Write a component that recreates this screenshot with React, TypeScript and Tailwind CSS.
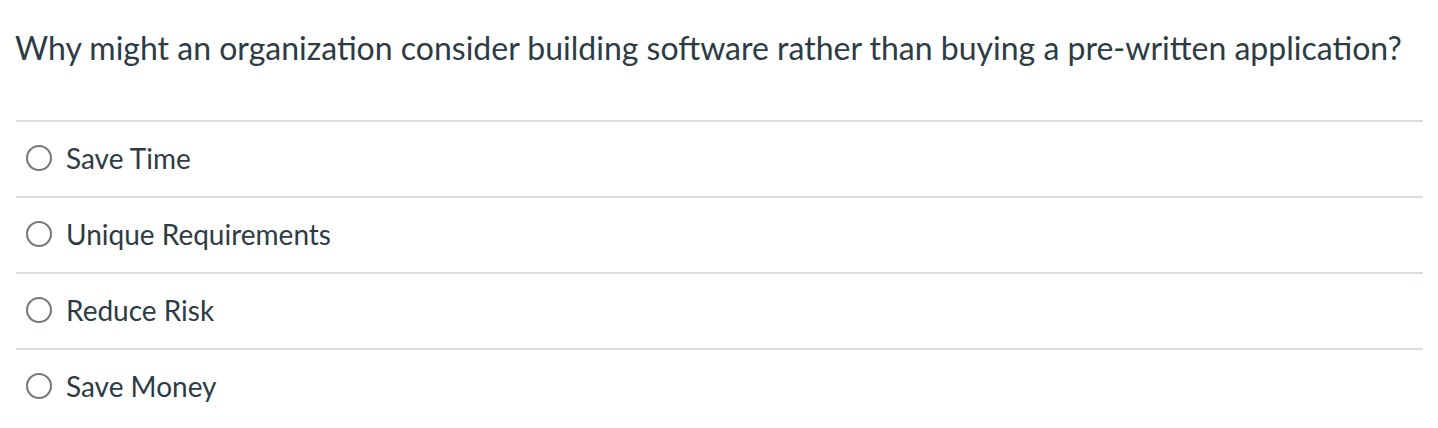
import React from "react";

const answers = ["Save Time", "Unique Requirements", "Reduce Risk", "Save Money"];

export default function App() {
  return (
    <div className="w-[1438px] h-[428px] bg-white overflow-hidden text-[#2d3b45]" style={{ fontFamily: "Lato, 'Liberation Sans', sans-serif" }}>
      <div className="pl-4 pr-[15px]">
        <div className="h-[120px] pt-[29px]">
          <p className="text-[32px] leading-[38px] m-0 -ml-px">
            Why might an organization consider building software rather than buying a pre-written application?
          </p>
        </div>
        {answers.map((a) => (
          <div key={a} className="border-t-2 border-[#dadddf] h-[76px] flex items-center pb-[2px]">
            <span className="ml-[10px] w-[26px] h-[26px] rounded-full border-2 border-[#73777b] bg-white shrink-0" />
            <span className="ml-[14px] text-[28px] leading-[34px]">{a}</span>
          </div>
        ))}
      </div>
    </div>
  );
}
